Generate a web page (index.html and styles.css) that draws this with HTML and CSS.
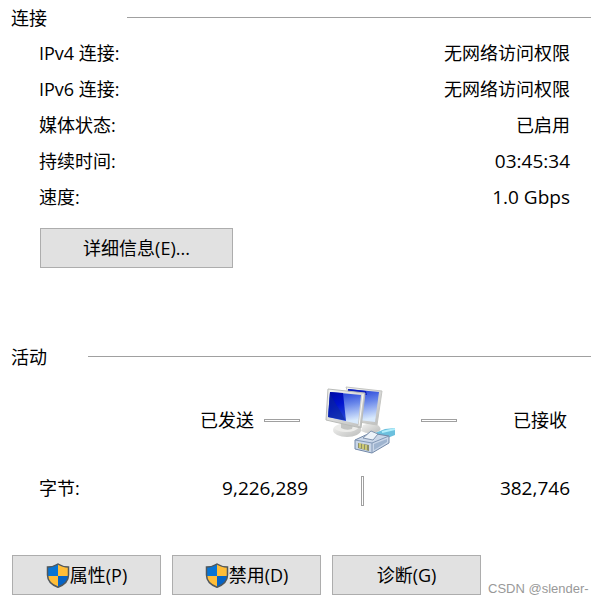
FILE: index.html
```html
<!DOCTYPE html>
<html lang="zh-CN">
<head>
  <meta charset="UTF-8">
  <title>网络状态</title>
  <link rel="stylesheet" href="styles.css">
</head>
<body>

  <!-- 盾牌图标 -->
  <svg width="0" height="0" class="defs">
    <symbol id="shield" viewBox="0 0 24 25">
      <path d="M12 1C9 3 5 4 1.500 4V12C1.500 18 6 22 12 24.300C18 22 22.500 18 22.500 12V4C19 4 15 3 12 1Z" fill="#ffbd38"/>
      <path d="M12 1C9 3 5 4 1.500 4V13H12Z" fill="#0874d4"/>
      <path d="M12 13H22.500C22 18 18 22 12 24.300Z" fill="#0563c6"/>
      <path d="M12 1C9 3 5 4 1.500 4V12C1.500 18 6 22 12 24.300C18 22 22.500 18 22.500 12V4C19 4 15 3 12 1Z" fill="none" stroke="#50575c" stroke-width="1.500"/>
    </symbol>
  </svg>

  <main>
    <section class="connection">
      <h2 class="title title-connection"><span>连接</span></h2>
      <dl class="info">
        <div class="info-row"><dt>IPv4 连接:</dt><dd>无网络访问权限</dd></div>
        <div class="info-row"><dt>IPv6 连接:</dt><dd>无网络访问权限</dd></div>
        <div class="info-row"><dt>媒体状态:</dt><dd>已启用</dd></div>
        <div class="info-row"><dt>持续时间:</dt><dd class="num">03:45:34</dd></div>
        <div class="info-row"><dt>速度:</dt><dd class="num">1.0 Gbps</dd></div>
      </dl>
      <button type="button" class="btn btn-details">详细信息(E)...</button>
    </section>

    <section class="activity">
      <h2 class="title title-activity"><span>活动</span></h2>
      <div class="traffic">
        <span>已发送</span>
        <i class="dash"></i>
        <svg class="network" viewBox="0 0 72 70" aria-hidden="true">
          <defs>
            <linearGradient id="screen" x1="0" y1="0" x2="0.200" y2="1">
              <stop offset="0" stop-color="#1230d4"/>
              <stop offset="0.500" stop-color="#6a88ea"/>
              <stop offset="1" stop-color="#d8e9fc"/>
            </linearGradient>
            <linearGradient id="dark" x1="0" y1="0" x2="0.300" y2="1">
              <stop offset="0" stop-color="#0009a0"/>
              <stop offset="0.550" stop-color="#0014d0"/>
              <stop offset="1" stop-color="#1c3cd0"/>
            </linearGradient>
            <linearGradient id="metal" x1="0" y1="0" x2="1" y2="1">
              <stop offset="0" stop-color="#f6f6f4"/>
              <stop offset="1" stop-color="#bcbdbc"/>
            </linearGradient>
          </defs>
          <!-- 后面的显示器 -->
          <path d="M38 40L49 37L54 41Q58 45 52 47Q44 50 36 46Z" fill="url(#metal)"/>
          <path d="M21 2L57 6L52 40L34 37Z" fill="url(#metal)" stroke="#c4c5c2"/>
          <path d="M23 4L54 7L50 37L34 35Z" fill="url(#screen)"/>
          <path d="M23 4L41 6L42 10L23 8Z" fill="#0b1cbc"/>
          <!-- 前面的显示器 -->
          <ellipse cx="22" cy="45" rx="14" ry="7" fill="url(#metal)"/>
          <path d="M9 43Q21 36 34 42Q31 47 21 47Q13 47 9 43Z" fill="#ececea"/>
          <path d="M16 37L28 40L27 44Q21 46 16 43Z" fill="#c3c4c2"/>
          <path d="M3 4L40 8L36 43L1 35Z" fill="url(#metal)" stroke="#b9bbb8"/>
          <path d="M5 7L36 10L33 39L3 32Z" fill="url(#screen)"/>
          <path d="M5 7L18 8L21 36L3 32Z" fill="url(#dark)"/>
          <path d="M5 9L17 29L20 35L3 32Z" fill="#0b2793" opacity="0.500"/>
          <path d="M38 9L34 41" stroke="#fafaf8" stroke-width="1"/>
          <!-- 网线接头 -->
          <path d="M50 48L60 44L70 43V50L60 54L53 51Z" fill="#6cc0de"/>
          <path d="M57 47L70 44" stroke="#b2effc" stroke-width="2"/>
          <path d="M30 55L45 48L64 51V58L47 68L30 64Z" fill="#c9d6e8" stroke="#7389a8"/>
          <path d="M30 55L47 58L64 51M47 58V68" fill="none" stroke="#8298b6"/>
          <path d="M38 53L46 46L53 49L48 55Z" fill="#edf3fa" stroke="#8295b0"/>
          <path d="M49 59L62 54V57L49 65Z" fill="#9fb4cf"/>
          <path d="M33 58L44 60V66L33 63Z" fill="#8e9068"/>
          <path d="M35 58V63M38 59V64M41 60V65" stroke="#e0dc79" stroke-width="1.500"/>
        </svg>
        <i class="dash"></i>
        <span class="received">已接收</span>
      </div>
      <div class="bytes">
        <span class="bytes-label">字节:</span>
        <span class="num">9,226,289</span>
        <i class="divider"></i>
        <span class="num bytes-received">382,746</span>
      </div>
    </section>

    <div class="actions">
      <button type="button" class="btn"><svg class="shield"><use href="#shield"/></svg>属性(P)</button>
      <button type="button" class="btn"><svg class="shield"><use href="#shield"/></svg>禁用(D)</button>
      <button type="button" class="btn">诊断(G)</button>
      <span class="watermark">CSDN @slender-</span>
    </div>
  </main>

</body>
</html>
```

FILE: styles.css
```css
* {
  box-sizing: border-box;
}
body {
  margin: 0;
  background: #fff;
  color: #000;
  font-family: "Open Sans", "Noto Sans CJK SC", sans-serif;
  font-size: 18px;
  line-height: 36px;
}
main {
  padding: 0 12px 0 11px;
}
.defs {
  position: absolute;
}
.num {
  font-size: 19px;
}

/* 分组标题和横线 */
.title {
  display: flex;
  align-items: center;
  height: 35px;
  margin: 0;
  font-size: 18px;
  font-weight: 400;
}
.title::after {
  content: "";
  flex: 1;
  height: 1px;
  background: #a0a0a0;
}
.title-connection span {
  width: 116px;
}
.title-activity span {
  width: 77px;
}

/* 连接信息 */
.info {
  margin: 0;
  padding: 0 21px 0 28px;
}
.info-row {
  display: flex;
  justify-content: space-between;
}
.info dd {
  margin: 0;
}

/* 按钮 */
.btn {
  display: flex;
  flex: none;
  align-items: center;
  justify-content: center;
  width: 149px;
  height: 40px;
  padding: 0;
  border: 1px solid #adadad;
  background: #e1e1e1;
  color: #000;
  font: inherit;
}
.btn:hover {
  border-color: #0078d7;
  background: #e5f1fb;
}
.btn-details {
  width: 193px;
  margin: 13px 0 0 29px;
}
.shield {
  width: 24px;
  height: 25px;
}

/* 活动 */
.activity {
  margin-top: 71px;
}
.traffic {
  display: flex;
  align-items: center;
  justify-content: flex-end;
  margin-top: 11px;
  padding-right: 24px;
}
.network {
  width: 72px;
  height: 70px;
  margin: 0 24px 0 25px;
}
.dash {
  width: 36px;
  height: 3px;
  border: 1px solid #a0a0a0;
}
.traffic .dash:nth-child(2) {
  margin-left: 10px;
}
.received {
  width: 110px;
  text-align: right;
}
.bytes {
  display: flex;
  align-items: flex-end;
  margin-top: 15px;
  padding: 0 21px 0 28px;
}
.bytes-label {
  flex: 1;
}
.divider {
  width: 3px;
  height: 30px;
  margin-left: 53px;
  border: 1px solid #a0a0a0;
}
.bytes-received {
  width: 206px;
  text-align: right;
}

/* 底部按钮 */
.actions {
  display: flex;
  gap: 11px;
  margin-top: 49px;
  padding-left: 1px;
}
.watermark {
  align-self: flex-end;
  margin-left: -4px;
  color: #999;
  font: 13px/13px "Liberation Sans", Arial, sans-serif;
  white-space: nowrap;
}
```
